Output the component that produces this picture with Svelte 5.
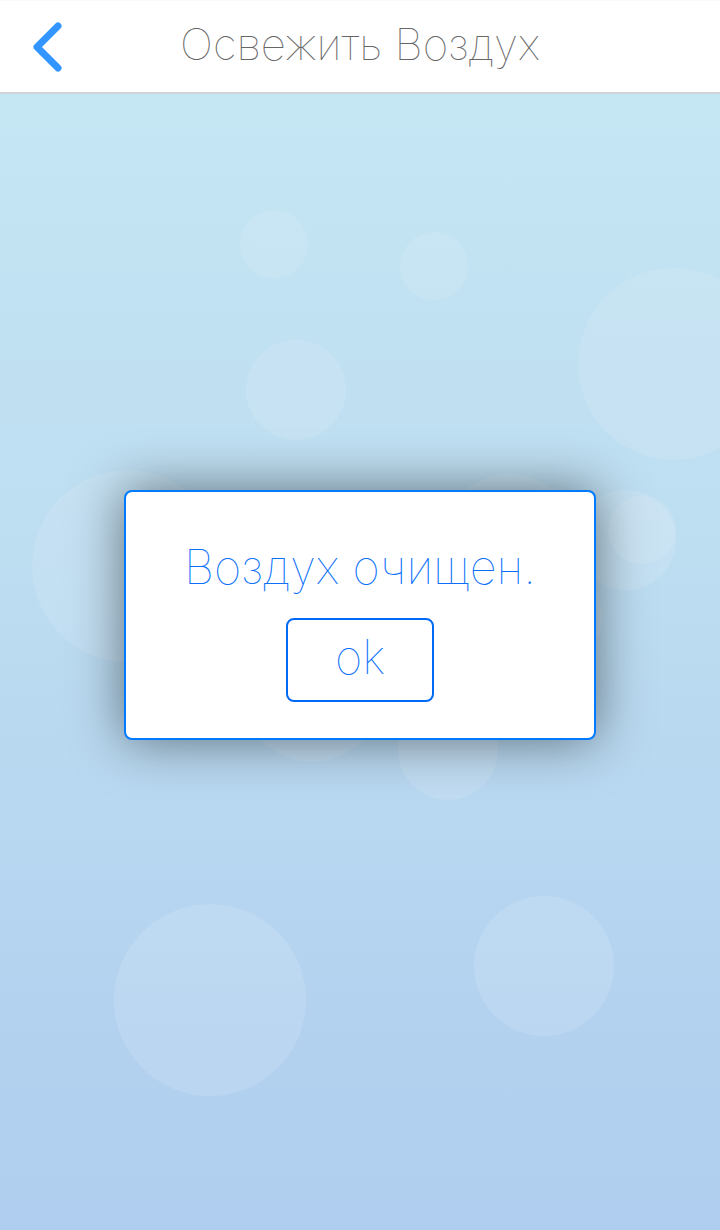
<script lang="ts">
  const bubbles = [
    { x: 274, y: 244, r: 34 },
    { x: 434, y: 266, r: 34 },
    { x: 296, y: 390, r: 50 },
    { x: 674, y: 364, r: 96 },
    { x: 128, y: 566, r: 96 },
    { x: 510, y: 544, r: 70 },
    { x: 626, y: 540, r: 50 },
    { x: 642, y: 530, r: 34 },
    { x: 552, y: 617, r: 50 },
    { x: 312, y: 692, r: 70 },
    { x: 448, y: 750, r: 50 },
    { x: 210, y: 1000, r: 96 },
    { x: 544, y: 966, r: 70 }
  ];
  const headerHeight = 94;
  let open = $state(true);
</script>

<div class="screen">
  <header>
    <button class="back" aria-label="Назад">
      <svg width="32" height="52" viewBox="0 0 32 52" aria-hidden="true">
        <path d="M26 5 L5 26 L26 47" />
      </svg>
    </button>
    <h1>Освежить Воздух</h1>
  </header>

  <main>
    <div class="sky" aria-hidden="true">
      {#each bubbles as b}
        <span
          class="bubble"
          style="left:{b.x - b.r}px;top:{b.y - b.r - headerHeight}px;width:{b.r * 2}px;height:{b.r * 2}px"
        ></span>
      {/each}
    </div>

    {#if open}
      <div class="dialog" role="alertdialog" aria-labelledby="message">
        <p id="message">Воздух очищен.</p>
        <button class="ok" onclick={() => (open = false)}>ok</button>
      </div>
    {/if}
  </main>
</div>

<style>
  :global(body) {
    margin: 0;
  }

  .screen {
    display: flex;
    flex-direction: column;
    min-height: 100vh;
    font-family: Inter, Roboto, "Noto Sans", sans-serif;
    font-weight: 100;
  }

  header {
    display: grid;
    grid-template-columns: 96px 1fr 96px;
    align-items: center;
    box-sizing: border-box;
    height: 94px;
    background: #fff;
    border-top: 1px solid #fafafa;
    border-bottom: 2px solid #d0d4d6;
  }

  .back {
    display: flex;
    align-items: center;
    height: 91px;
    padding: 0 32px;
    border: 0;
    background: none;
    cursor: pointer;
  }

  .back svg {
    flex: none;
    fill: none;
    stroke: #3395ff;
    stroke-width: 7;
    stroke-linecap: round;
    stroke-linejoin: round;
  }

  h1 {
    margin: 0;
    padding-bottom: 6px;
    text-align: center;
    font-size: 44px;
    font-weight: 100;
    line-height: 52px;
    color: #666;
  }

  main {
    position: relative;
    flex: 1;
    display: flex;
    align-items: center;
    justify-content: center;
    box-sizing: border-box;
    padding: 0 124px 94px;
    background: linear-gradient(#c5e6f3, #bcdcf1 45%, #b6d5f0 70%, #afcdee);
  }

  .sky {
    position: absolute;
    inset: 0;
    overflow: hidden;
  }

  .bubble {
    position: absolute;
    border-radius: 50%;
    background: rgba(226, 241, 250, 0.19);
  }

  .dialog {
    position: relative;
    flex: 1;
    display: flex;
    flex-direction: column;
    align-items: center;
    gap: 20px;
    box-sizing: border-box;
    padding: 44px 20px 36px;
    border: 2px solid #007aff;
    border-radius: 8px;
    background: #fff;
    box-shadow: 0 0 52px rgba(0, 0, 0, 0.5);
    color: #0a70fa;
  }

  p {
    margin: 0;
    font-size: 47px;
    line-height: 62px;
    text-align: center;
  }

  .ok {
    box-sizing: border-box;
    min-width: 148px;
    padding: 6px 20px 12px;
    border: 2px solid #006af5;
    border-radius: 8px;
    background: #fff;
    color: inherit;
    font: inherit;
    font-size: 47px;
    line-height: 62px;
    cursor: pointer;
  }
</style>
